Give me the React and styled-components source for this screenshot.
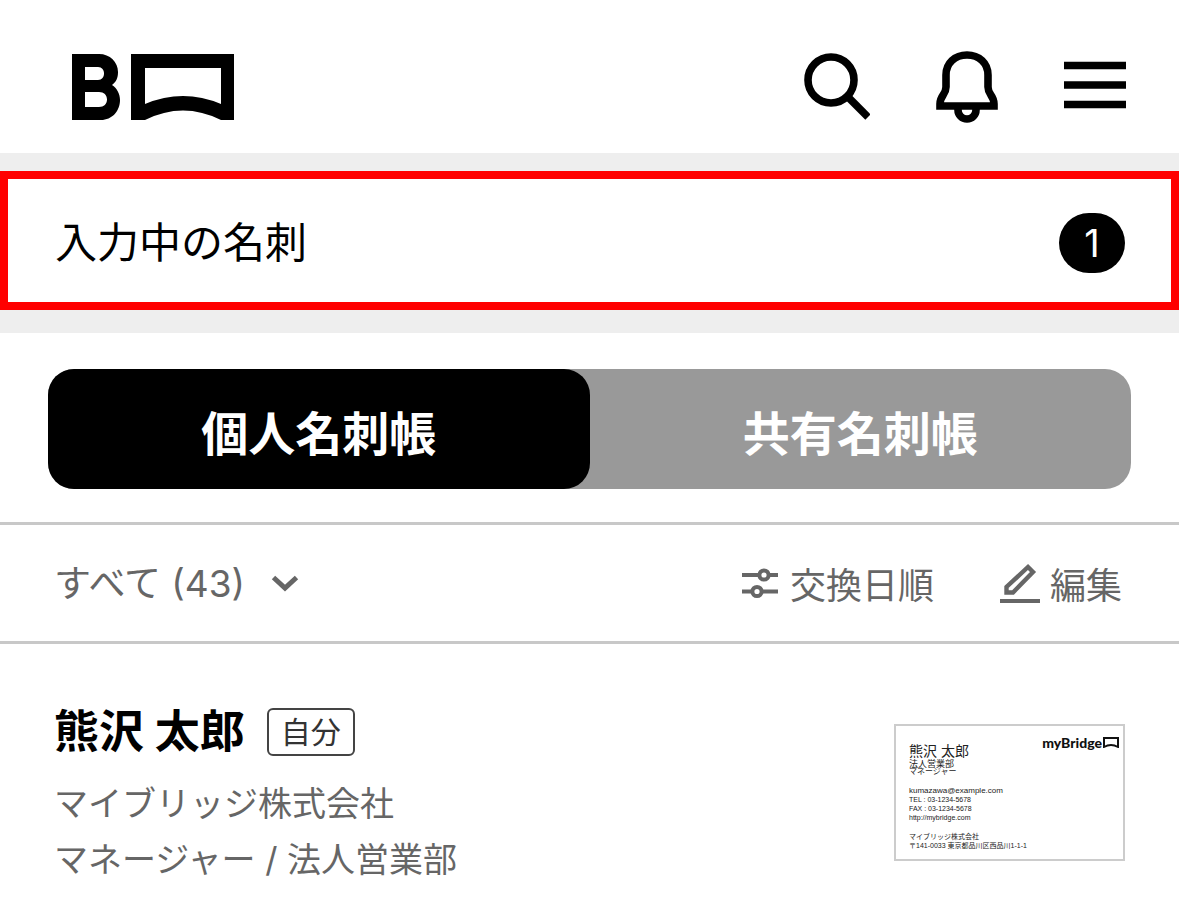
import styled, { createGlobalStyle } from 'styled-components'

const GlobalStyle = createGlobalStyle`
  *, *::before, *::after {
    box-sizing: border-box;
  }

  body {
    margin: 0;
    background: #fff;
    color: #000;
    font-family: Inter, 'Noto Sans CJK JP', sans-serif;
  }

  button, select {
    margin: 0;
    padding: 0;
    border: 0;
    background: none;
    color: inherit;
    font: inherit;
    cursor: pointer;
  }

  h2, p {
    margin: 0;
  }

  svg {
    display: block;
    flex: none;
  }
`

const contact = {
  name: '熊沢 太郎',
  company: 'マイブリッジ株式会社',
  title: 'マネージャー',
  department: '法人営業部',
}

export default function App() {
  return (
    <>
      <GlobalStyle />
      <Header>
        <a href="#home" aria-label="myBridge">
          <Logo />
        </a>
        <HeaderActions>
          <button type="button" aria-label="検索"><SearchIcon /></button>
          <button type="button" aria-label="お知らせ"><BellIcon /></button>
          <button type="button" aria-label="メニュー"><MenuIcon /></button>
        </HeaderActions>
      </Header>

      <NoticeArea>
        <Notice href="#pending">
          <span>入力中の名刺</span>
          <Badge>1</Badge>
        </Notice>
      </NoticeArea>

      <main>
        <TabArea>
          <TabList role="tablist">
            <Tab type="button" role="tab" aria-selected="true" $active>個人名刺帳</Tab>
            <Tab type="button" role="tab" aria-selected="false">共有名刺帳</Tab>
          </TabList>
        </TabArea>

        <Toolbar>
          <Filter>
            <select aria-label="グループ" defaultValue="all">
              <option value="all">すべて (43)</option>
            </select>
            <ChevronIcon />
          </Filter>
          <ToolbarActions>
            <ToolButton type="button"><SortIcon />交換日順</ToolButton>
            <ToolButton type="button"><EditIcon />編集</ToolButton>
          </ToolbarActions>
        </Toolbar>

        <ContactRow>
          <div>
            <NameLine>
              <Name>{contact.name}</Name>
              <SelfTag>自分</SelfTag>
            </NameLine>
            <Detail>{contact.company}</Detail>
            <Detail>{contact.title} / {contact.department}</Detail>
          </div>
          <BusinessCard />
        </ContactRow>
      </main>
    </>
  )
}

function BusinessCard() {
  return (
    <Card>
      <CardTop>
        <div>
          <CardLine $size="14px" $height="18px">{contact.name}</CardLine>
          <CardLine $size="9px" $height="8px">{contact.department}</CardLine>
          <CardLine $size="8px" $height="8px">{contact.title}</CardLine>
        </div>
        <CardBrand>
          myBridge
          <svg width="16" height="11" viewBox="0 0 16 11">
            <path d="M1 1H15V10Q8 6 1 10Z" fill="none" stroke="#111" strokeWidth="2" />
          </svg>
        </CardBrand>
      </CardTop>
      <CardBlock>
        <CardLine $size="8px" $height="9px">kumazawa@example.com</CardLine>
        <CardLine $size="7px" $height="9px">TEL : 03-1234-5678</CardLine>
        <CardLine $size="7px" $height="9px">FAX : 03-1234-5678</CardLine>
        <CardLine $size="7px" $height="9px">http://mybridge.com</CardLine>
      </CardBlock>
      <CardBlock>
        <CardLine $size="7px" $height="9px">{contact.company}</CardLine>
        <CardLine $size="7px" $height="9px">〒141-0033 東京都品川区西品川1-1-1</CardLine>
      </CardBlock>
    </Card>
  )
}

function Logo() {
  return (
    <svg width="162" height="66" viewBox="0 0 162 66">
      <path
        fillRule="evenodd"
        d="M0 0H27C38 0 46 8 46 18C46 24 44 28 40 31C45 34 48 40 48 46C48 57 40 66 29 66H0ZM13 13V26H26C30 26 32 23 32 19.5S30 13 26 13ZM13 38V53H27C32 53 35 50 35 45.5S32 38 27 38Z"
      />
      <path
        fillRule="evenodd"
        d="M59 0H162V66H149Q111 47 73 66H59ZM73 14V50Q111 34 149 50V14Z"
      />
    </svg>
  )
}

function SearchIcon() {
  return (
    <svg width="68" height="68" viewBox="0 0 68 68" fill="none" stroke="#000" strokeWidth="7.6">
      <circle cx="29" cy="27" r="23" />
      <path d="M45 43L66 64" />
    </svg>
  )
}

function BellIcon() {
  return (
    <svg width="64" height="74" viewBox="0 0 64 74" fill="none" stroke="#000" strokeWidth="7.6">
      <path d="M5 56V54C5 45 11 45 11 37V25C11 13 20 5 32 5S53 13 53 25V37C53 45 59 45 59 54V56Z" />
      <path d="M23 57V60A8.5 8.5 0 0 0 41 60V57" />
    </svg>
  )
}

function MenuIcon() {
  return (
    <svg width="62" height="52" viewBox="0 0 62 52" stroke="#000" strokeWidth="7.6">
      <path d="M0 4.5H62M0 24H62M0 43.5H62" />
    </svg>
  )
}

function ChevronIcon() {
  return (
    <svg width="28" height="18" viewBox="0 0 28 18" fill="none" stroke="#666" strokeWidth="5">
      <path d="M2.5 3.5L14 14L25.5 3.5" />
    </svg>
  )
}

function SortIcon() {
  return (
    <svg width="38" height="32" viewBox="0 0 38 32" fill="none" stroke="#666" strokeWidth="4">
      <path d="M0 8H17M27 8H36M0 24.5H10M20 24.5H36" />
      <circle cx="22" cy="8" r="4.6" />
      <circle cx="15" cy="24.5" r="4.6" />
    </svg>
  )
}

function EditIcon() {
  return (
    <svg width="40" height="40" viewBox="0 0 40 40" fill="none" stroke="#666" strokeWidth="4.4">
      <path d="M6.5 29.5V24L28 4L33 9L13 29.5Z" />
      <path d="M0 38H40" strokeWidth="4" />
    </svg>
  )
}

const Header = styled.header`
  display: flex;
  align-items: center;
  justify-content: space-between;
  padding: 50px 53px 29px 72px;
`

const HeaderActions = styled.div`
  display: flex;
  align-items: center;
  gap: 65px;
`

const NoticeArea = styled.div`
  padding: 18px 0 23px;
  background: #eee;
`

const Notice = styled.a`
  display: flex;
  align-items: center;
  justify-content: space-between;
  padding: 32px 46px 27px 47px;
  border: 8px solid #f00;
  background: #fff;
  color: #000;
  font-size: 42px;
  line-height: 64px;
  text-decoration: none;
`

const Badge = styled.span`
  min-width: 66px;
  border-radius: 30px;
  background: #000;
  color: #fff;
  font-size: 38px;
  line-height: 60px;
  text-align: center;
`

const TabArea = styled.div`
  padding: 36px 48px 33px;
`

const TabList = styled.div`
  display: grid;
  grid-template-columns: 1fr 1fr;
  border-radius: 26px;
  background: #999;
`

const Tab = styled.button`
  && {
    height: 120px;
    padding-top: 2px;
    border-radius: 26px;
    background: ${(props) => (props.$active ? '#000' : 'transparent')};
    color: #fff;
    font-size: 47px;
    font-weight: 600;
  }
`

const Toolbar = styled.div`
  display: flex;
  align-items: center;
  justify-content: space-between;
  height: 122px;
  padding: 0 57px 0 54px;
  border: solid #c8c8c8;
  border-width: 3px 0;
  color: #666;
  font-size: 36px;
`

const Filter = styled.label`
  display: flex;
  align-items: center;
  gap: 21px;

  select {
    appearance: none;
    font-size: 37px;
  }
`

const ToolbarActions = styled.div`
  display: flex;
  gap: 66px;
`

const ToolButton = styled.button`
  && {
    display: flex;
    align-items: center;
    gap: 10px;
  }
`

const ContactRow = styled.article`
  display: flex;
  align-items: center;
  justify-content: space-between;
  padding: 56px 54px 14px;
`

const NameLine = styled.div`
  display: flex;
  align-items: center;
  gap: 22px;
  margin-bottom: 12px;
`

const Name = styled.h2`
  font-size: 45px;
  line-height: 64px;
`

const SelfTag = styled.span`
  padding: 0 12px;
  border: 2px solid #444;
  border-radius: 6px;
  color: #333;
  font-size: 30px;
  line-height: 44px;
`

const Detail = styled.p`
  color: #666;
  font-size: 34px;
  line-height: 56px;
`

const Card = styled.div`
  width: 231px;
  margin-bottom: 4px;
  padding: 16px 4px 9px 13px;
  border: 2px solid #ccc;
  color: #222;
  font-family: 'Liberation Sans', 'Noto Sans CJK JP', sans-serif;
`

const CardTop = styled.div`
  display: flex;
  align-items: flex-start;
  justify-content: space-between;
`

const CardBrand = styled.div`
  display: flex;
  align-items: center;
  gap: 1px;
  margin-top: -8px;
  color: #111;
  font-family: Lato, sans-serif;
  font-size: 14px;
  font-weight: 900;
`

const CardBlock = styled.div`
  margin-top: 10px;
`

const CardLine = styled.p`
  font-size: ${(props) => props.$size};
  line-height: ${(props) => props.$height};
  white-space: nowrap;
`
